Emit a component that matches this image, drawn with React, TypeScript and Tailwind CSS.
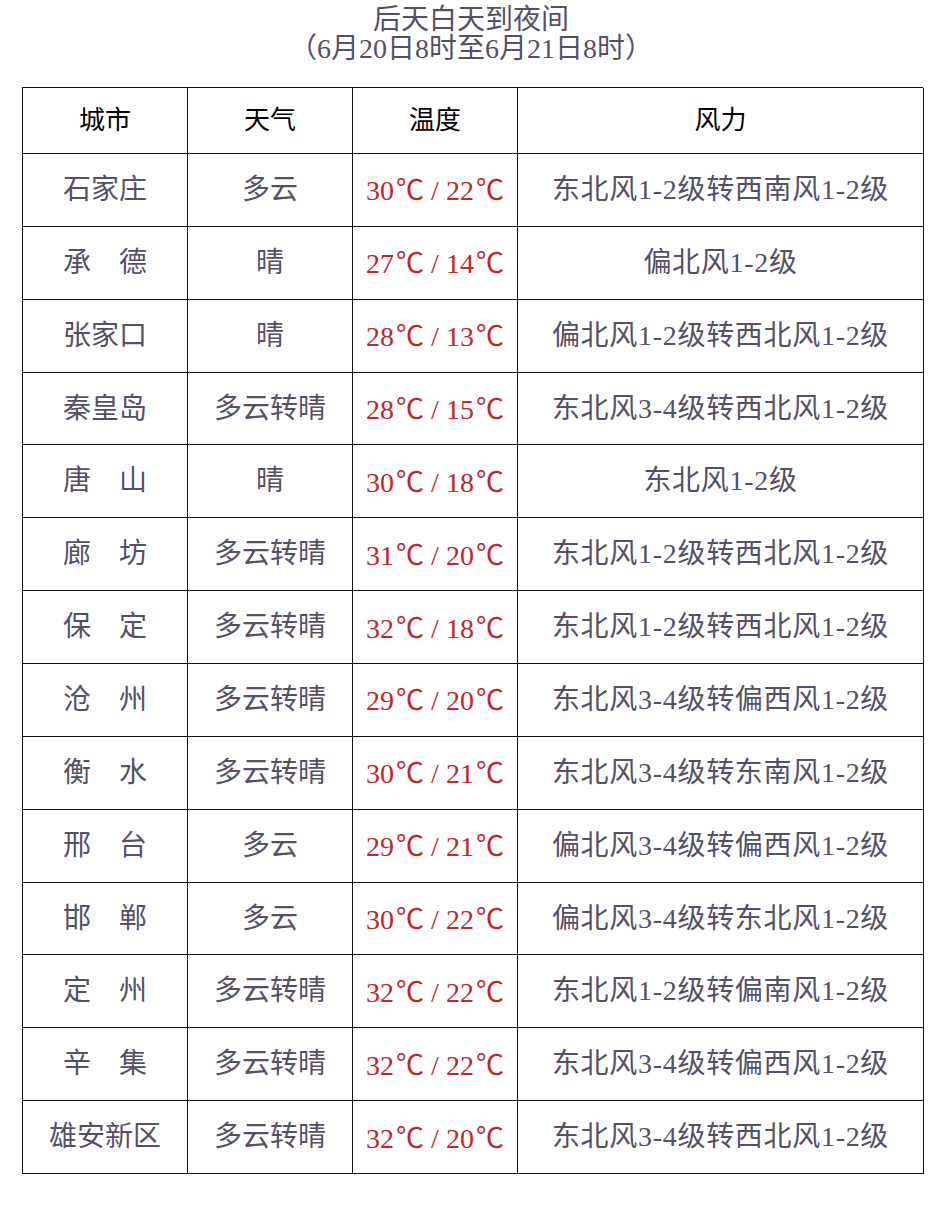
const rows = [
  ["石家庄", "多云", "30", "22", "东北风1-2级转西南风1-2级"],
  ["承　德", "晴", "27", "14", "偏北风1-2级"],
  ["张家口", "晴", "28", "13", "偏北风1-2级转西北风1-2级"],
  ["秦皇岛", "多云转晴", "28", "15", "东北风3-4级转西北风1-2级"],
  ["唐　山", "晴", "30", "18", "东北风1-2级"],
  ["廊　坊", "多云转晴", "31", "20", "东北风1-2级转西北风1-2级"],
  ["保　定", "多云转晴", "32", "18", "东北风1-2级转西北风1-2级"],
  ["沧　州", "多云转晴", "29", "20", "东北风3-4级转偏西风1-2级"],
  ["衡　水", "多云转晴", "30", "21", "东北风3-4级转东南风1-2级"],
  ["邢　台", "多云", "29", "21", "偏北风3-4级转偏西风1-2级"],
  ["邯　郸", "多云", "30", "22", "偏北风3-4级转东北风1-2级"],
  ["定　州", "多云转晴", "32", "22", "东北风1-2级转偏南风1-2级"],
  ["辛　集", "多云转晴", "32", "22", "东北风3-4级转偏西风1-2级"],
  ["雄安新区", "多云转晴", "32", "20", "东北风3-4级转西北风1-2级"],
];

const font = { fontFamily: '"Liberation Serif", "Noto Sans CJK SC", serif' };
const cjk = { fontFamily: '"Noto Sans CJK SC", sans-serif' };

function Temp({ hi, lo }: { hi: string; lo: string }) {
  return (
    <span className="flex items-baseline">
      {hi}
      <span className="ml-[2px]" style={cjk}>℃</span>
      <span className="mx-[7px]">/</span>
      {lo}
      <span className="ml-[2px]" style={cjk}>℃</span>
    </span>
  );
}

export default function App() {
  const cell = "h-[72.86px] flex items-center justify-center border-r border-b border-[#111] text-[28px]";
  return (
    <div className="w-[942px] h-[1218px] bg-white" style={font}>
      {/* Title */}
      <div className="h-[87px] pt-[5px] text-center text-[#555066] text-[28px] leading-[29px]">
        <div>后天白天到夜间</div>
        <div>（6月20日8时至6月21日8时）</div>
      </div>

      {/* Table */}
      <div className="ml-[22px] w-[901px] grid grid-cols-[165px_165px_165px_406px] border-t border-l border-[#111]">
        {["城市", "天气", "温度", "风力"].map((h) => (
          <div
            key={h}
            className="h-[66px] flex items-center justify-center border-r border-b border-[#111] text-[26px] text-black"
          >
            {h}
          </div>
        ))}
        {rows.map((r, i) => (
          <div key={i} className="contents">
            <div className={`${cell} text-[#555066]`}>{r[0]}</div>
            <div className={`${cell} text-[#555066]`}>{r[1]}</div>
            <div className={`${cell} text-[#c0262c]`}>
              <Temp hi={r[2]} lo={r[3]} />
            </div>
            <div className={`${cell} text-[#555066] tracking-[0.7px]`}>{r[4]}</div>
          </div>
        ))}
      </div>
    </div>
  );
}
